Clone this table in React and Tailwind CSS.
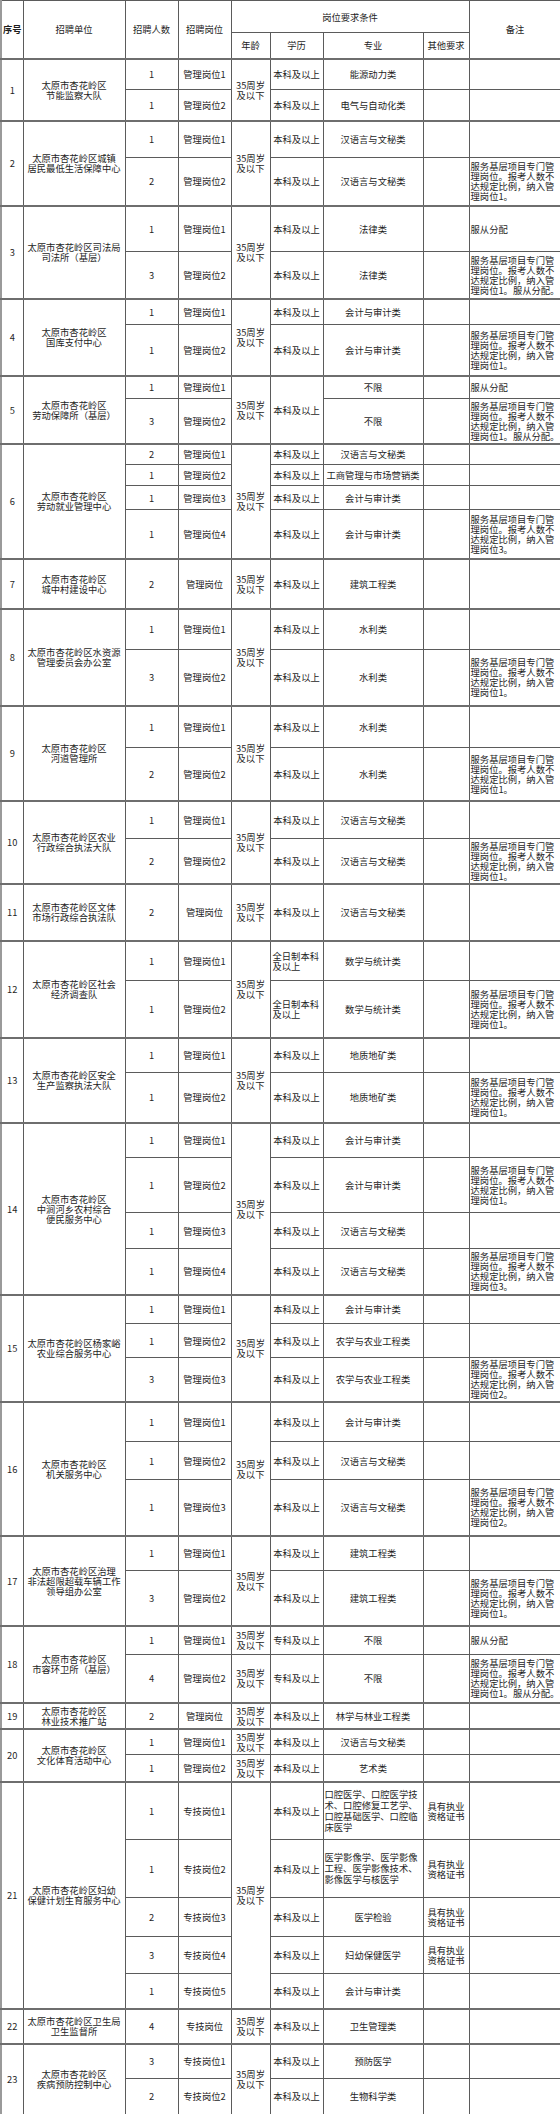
import React from 'react'

const BK = '本科及以上'
const ZK = '专科及以上'
const AGE = ['35周岁', '及以下']
const CERT = ['具有执业', '资格证书']
const FULL = ['全日制本科', '及以上']

// remark text for the "服务基层" posts, broken the way the sheet breaks it
const note = (n, obey) => [
    '服务基层项目专门管',
    '理岗位。报考人数不',
    '达规定比例，纳入管',
    obey ? `理岗位${n}。服从分配。` : `理岗位${n}。`,
]

const groups = [
    {
        unit: ['太原市杏花岭区', '节能监察大队'],
        rows: [
            { h: 31, c: '1', p: '管理岗位1', e: BK, m: '能源动力类' },
            { h: 31, c: '1', p: '管理岗位2', e: BK, m: '电气与自动化类' },
        ],
    },
    {
        unit: ['太原市杏花岭区城镇', '居民最低生活保障中心'],
        rows: [
            { h: 37, c: '1', p: '管理岗位1', e: BK, m: '汉语言与文秘类' },
            { h: 48, c: '2', p: '管理岗位2', e: BK, m: '汉语言与文秘类', n: note(1) },
        ],
    },
    {
        unit: ['太原市杏花岭区司法局', '司法所（基层）'],
        rows: [
            { h: 46, c: '1', p: '管理岗位1', e: BK, m: '法律类', n: ['服从分配'] },
            { h: 47, c: '3', p: '管理岗位2', e: BK, m: '法律类', n: note(1, true) },
        ],
    },
    {
        unit: ['太原市杏花岭区', '国库支付中心'],
        rows: [
            { h: 26, c: '1', p: '管理岗位1', e: BK, m: '会计与审计类' },
            { h: 51, c: '1', p: '管理岗位2', e: BK, m: '会计与审计类', n: note(1) },
        ],
    },
    {
        unit: ['太原市杏花岭区', '劳动保障所（基层）'],
        eduMerged: BK,
        rows: [
            { h: 23, c: '1', p: '管理岗位1', m: '不限', n: ['服从分配'] },
            { h: 45, c: '3', p: '管理岗位2', m: '不限', n: note(1, true) },
        ],
    },
    {
        unit: ['太原市杏花岭区', '劳动就业管理中心'],
        rows: [
            { h: 21, c: '2', p: '管理岗位1', e: BK, m: '汉语言与文秘类' },
            { h: 21, c: '1', p: '管理岗位2', e: BK, m: '工商管理与市场营销类' },
            { h: 24, c: '1', p: '管理岗位3', e: BK, m: '会计与审计类' },
            { h: 49, c: '1', p: '管理岗位4', e: BK, m: '会计与审计类', n: note(3) },
        ],
    },
    {
        unit: ['太原市杏花岭区', '城中村建设中心'],
        rows: [{ h: 50, c: '2', p: '管理岗位', e: BK, m: '建筑工程类' }],
    },
    {
        unit: ['太原市杏花岭区水资源', '管理委员会办公室'],
        rows: [
            { h: 41, c: '1', p: '管理岗位1', e: BK, m: '水利类' },
            { h: 56, c: '3', p: '管理岗位2', e: BK, m: '水利类', n: note(1) },
        ],
    },
    {
        unit: ['太原市杏花岭区', '河道管理所'],
        rows: [
            { h: 42, c: '1', p: '管理岗位1', e: BK, m: '水利类' },
            { h: 53, c: '2', p: '管理岗位2', e: BK, m: '水利类', n: note(1) },
        ],
    },
    {
        unit: ['太原市杏花岭区农业', '行政综合执法大队'],
        rows: [
            { h: 38, c: '1', p: '管理岗位1', e: BK, m: '汉语言与文秘类' },
            { h: 45, c: '2', p: '管理岗位2', e: BK, m: '汉语言与文秘类', n: note(1) },
        ],
    },
    {
        unit: ['太原市杏花岭区文体', '市场行政综合执法队'],
        rows: [{ h: 57, c: '2', p: '管理岗位', e: BK, m: '汉语言与文秘类' }],
    },
    {
        unit: ['太原市杏花岭区社会', '经济调查队'],
        rows: [
            { h: 40, c: '1', p: '管理岗位1', e: FULL, m: '数学与统计类' },
            { h: 57, c: '1', p: '管理岗位2', e: FULL, m: '数学与统计类', n: note(1) },
        ],
    },
    {
        unit: ['太原市杏花岭区安全', '生产监察执法大队'],
        rows: [
            { h: 35, c: '1', p: '管理岗位1', e: BK, m: '地质地矿类' },
            { h: 50, c: '1', p: '管理岗位2', e: BK, m: '地质地矿类', n: note(1) },
        ],
    },
    {
        unit: ['太原市杏花岭区', '中涧河乡农村综合', '便民服务中心'],
        rows: [
            { h: 35, c: '1', p: '管理岗位1', e: BK, m: '会计与审计类' },
            { h: 55, c: '1', p: '管理岗位2', e: BK, m: '会计与审计类', n: note(1) },
            { h: 36, c: '1', p: '管理岗位3', e: BK, m: '汉语言与文秘类' },
            { h: 46, c: '1', p: '管理岗位4', e: BK, m: '汉语言与文秘类', n: note(3) },
        ],
    },
    {
        unit: ['太原市杏花岭区杨家峪', '农业综合服务中心'],
        rows: [
            { h: 29, c: '1', p: '管理岗位1', e: BK, m: '会计与审计类' },
            { h: 34, c: '1', p: '管理岗位2', e: BK, m: '农学与农业工程类' },
            { h: 44, c: '3', p: '管理岗位3', e: BK, m: '农学与农业工程类', n: note(2) },
        ],
    },
    {
        unit: ['太原市杏花岭区', '机关服务中心'],
        rows: [
            { h: 40, c: '1', p: '管理岗位1', e: BK, m: '会计与审计类' },
            { h: 38, c: '1', p: '管理岗位2', e: BK, m: '汉语言与文秘类' },
            { h: 56, c: '1', p: '管理岗位3', e: BK, m: '汉语言与文秘类', n: note(2) },
        ],
    },
    {
        unit: ['太原市杏花岭区治理', '非法超限超载车辆工作', '领导组办公室'],
        rows: [
            { h: 35, c: '1', p: '管理岗位1', e: BK, m: '建筑工程类' },
            { h: 55, c: '3', p: '管理岗位2', e: BK, m: '建筑工程类', n: note(1) },
        ],
    },
    {
        unit: ['太原市杏花岭区', '市容环卫所（基层）'],
        agePerRow: true,
        rows: [
            { h: 29, c: '1', p: '管理岗位1', e: ZK, m: '不限', n: ['服从分配'] },
            { h: 48, c: '4', p: '管理岗位2', e: ZK, m: '不限', n: note(1, true) },
        ],
    },
    {
        unit: ['太原市杏花岭区', '林业技术推广站'],
        rows: [{ h: 26, c: '2', p: '管理岗位', e: BK, m: '林学与林业工程类' }],
    },
    {
        unit: ['太原市杏花岭区', '文化体育活动中心'],
        agePerRow: true,
        rows: [
            { h: 26, c: '1', p: '管理岗位1', e: BK, m: '汉语言与文秘类' },
            { h: 27, c: '1', p: '管理岗位2', e: BK, m: '艺术类' },
        ],
    },
    {
        unit: ['太原市杏花岭区妇幼', '保健计划生育服务中心'],
        rows: [
            {
                h: 58,
                c: '1',
                p: '专技岗位1',
                e: BK,
                m: ['口腔医学、口腔医学技', '术、口腔修复工艺学、', '口腔基础医学、口腔临', '床医学'],
                o: CERT,
            },
            {
                h: 58,
                c: '1',
                p: '专技岗位2',
                e: BK,
                m: ['医学影像学、医学影像', '工程、医学影像技术、', '影像医学与核医学'],
                o: CERT,
            },
            { h: 39, c: '2', p: '专技岗位3', e: BK, m: '医学检验', o: CERT },
            { h: 37, c: '3', p: '专技岗位4', e: BK, m: '妇幼保健医学', o: CERT },
            { h: 35, c: '1', p: '专技岗位5', e: BK, m: '会计与审计类' },
        ],
    },
    {
        unit: ['太原市杏花岭区卫生局', '卫生监督所'],
        rows: [{ h: 35, c: '4', p: '专技岗位', e: BK, m: '卫生管理类' }],
    },
    {
        unit: ['太原市杏花岭区', '疾病预防控制中心'],
        rows: [
            { h: 35, c: '3', p: '专技岗位1', e: BK, m: '预防医学' },
            { h: 36, c: '2', p: '专技岗位2', e: BK, m: '生物科学类' },
        ],
    },
]

const Lines = ({ text }) => {
    if (!text) return null
    const list = Array.isArray(text) ? text : [text]
    return list.map((t, i) => (
        <div key={i} className="whitespace-nowrap">
            {t}
        </div>
    ))
}

const base = 'border border-[#5b5b5b] p-0 align-middle'
const thick = 'border-b-2 border-b-[#6e6e6e]'

const App = () => {
    return (
        <div className="w-[560px] bg-white text-[#1e1e1e] font-['Noto_Sans_CJK_SC',sans-serif] text-[9.3px] leading-[10px]">
            <table className="w-[560px] table-fixed border-collapse border-l-2 border-l-[#9a9a9a] text-center">
                <colgroup>
                    <col className="w-[22px]" />
                    <col className="w-[102px]" />
                    <col className="w-[53px]" />
                    <col className="w-[53px]" />
                    <col className="w-[39px]" />
                    <col className="w-[53px]" />
                    <col className="w-[100px]" />
                    <col className="w-[46px]" />
                    <col className="w-[92px]" />
                </colgroup>
                <thead>
                    <tr className="h-[32px]">
                        <th rowSpan={2} className={`${base} ${thick} font-bold`}>
                            序号
                        </th>
                        <th rowSpan={2} className={`${base} ${thick} font-normal`}>
                            招聘单位
                        </th>
                        <th rowSpan={2} className={`${base} ${thick} font-normal`}>
                            招聘人数
                        </th>
                        <th rowSpan={2} className={`${base} ${thick} font-normal`}>
                            招聘岗位
                        </th>
                        <th colSpan={4} className={`${base} font-normal`}>
                            岗位要求条件
                        </th>
                        <th rowSpan={2} className={`${base} ${thick} font-normal`}>
                            备注
                        </th>
                    </tr>
                    <tr className="h-[26px]">
                        <th className={`${base} ${thick} font-normal`}>年龄</th>
                        <th className={`${base} ${thick} font-normal`}>学历</th>
                        <th className={`${base} ${thick} font-normal`}>专业</th>
                        <th className={`${base} ${thick} font-normal`}>其他要求</th>
                    </tr>
                </thead>
                <tbody>
                    {groups.map((g, gi) =>
                        g.rows.map((r, ri) => {
                            const span = g.rows.length
                            const last = ri === span - 1
                            const cell = last ? `${base} ${thick}` : base
                            const group = `${base} ${thick}`
                            return (
                                <tr key={`${gi}-${ri}`} style={{ height: r.h }}>
                                    {ri === 0 && (
                                        <td rowSpan={span} className={group}>
                                            {gi + 1}
                                        </td>
                                    )}
                                    {ri === 0 && (
                                        <td rowSpan={span} className={group}>
                                            <Lines text={g.unit} />
                                        </td>
                                    )}
                                    <td className={cell}>{r.c}</td>
                                    <td className={cell}>{r.p}</td>
                                    {g.agePerRow ? (
                                        <td className={cell}>
                                            <Lines text={AGE} />
                                        </td>
                                    ) : (
                                        ri === 0 && (
                                            <td rowSpan={span} className={group}>
                                                <Lines text={AGE} />
                                            </td>
                                        )
                                    )}
                                    {g.eduMerged ? (
                                        ri === 0 && (
                                            <td rowSpan={span} className={group}>
                                                {g.eduMerged}
                                            </td>
                                        )
                                    ) : Array.isArray(r.e) ? (
                                        <td className={`${cell} pl-[2px] text-left`}>
                                            <Lines text={r.e} />
                                        </td>
                                    ) : (
                                        <td className={cell}>{r.e}</td>
                                    )}
                                    {Array.isArray(r.m) ? (
                                        <td className={`${cell} pl-[1px] text-left leading-[11px]`}>
                                            <Lines text={r.m} />
                                        </td>
                                    ) : (
                                        <td className={cell}>{r.m}</td>
                                    )}
                                    <td className={cell}>
                                        <Lines text={r.o} />
                                    </td>
                                    <td className={`${cell} pl-[1px] text-left`}>
                                        <Lines text={r.n} />
                                    </td>
                                </tr>
                            )
                        })
                    )}
                </tbody>
            </table>
        </div>
    )
}

export default App
